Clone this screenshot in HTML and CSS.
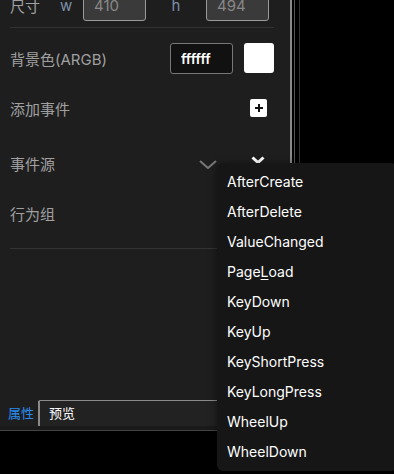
FILE: index.html
```html
<!DOCTYPE html>
<html lang="zh">
<head>
 <meta charset="UTF-8">
 <meta name="viewport" content="width=device-width, initial-scale=1.0">
 <title>属性</title>
 <link rel="stylesheet" href="styles.css">
</head>
<body>
<div class="app">
 <div class="main">
  <div class="panel">
   <div class="content">
    <div class="row size-row">
     <span class="label">尺寸</span>
     <span class="axis">w</span>
     <input class="num" value="410" disabled>
     <span class="axis axis-h">h</span>
     <input class="num" value="494" disabled>
    </div>
    <div class="sep"></div>
    <div class="row row-color">
     <span class="label">背景色(ARGB)</span>
     <input class="color-input" value="ffffff">
     <span class="swatch"></span>
    </div>
    <div class="row">
     <span class="label">添加事件</span>
     <button class="add-btn">
      <svg width="10" height="10" viewBox="0 0 10 10"><path d="M5 1v8M1 5h8" stroke="#111" stroke-width="2"/></svg>
     </button>
    </div>
    <div class="row row-tall">
     <span class="label">事件源</span>
     <svg class="chev-gray" width="18" height="9" viewBox="0 0 18 9"><path d="M1 1l8 7 8-7" fill="none" stroke="#777" stroke-width="2"/></svg>
     <svg class="chev-white" width="14" height="8" viewBox="0 0 14 8"><path d="M1.5 1.5l5.5 5 5.5-5" fill="none" stroke="#fff" stroke-width="3"/></svg>
    </div>
    <div class="row">
     <span class="label">行为组</span>
    </div>
    <div class="sep sep-bottom"></div>
   </div>
  </div>
  <div class="splitter"></div>
  <div class="view"></div>
 </div>
 <div class="tabs">
  <div class="tab active">属性</div>
  <div class="tab">预览</div>
 </div>
 <div class="status"></div>

 <ul class="menu">
  <li>AfterCreate</li>
  <li>AfterDelete</li>
  <li>ValueChanged</li>
  <li>Page<u>L</u>oad</li>
  <li>KeyDown</li>
  <li>KeyUp</li>
  <li>KeyShortPress</li>
  <li>KeyLongPress</li>
  <li>WheelUp</li>
  <li>WheelDown</li>
 </ul>
</div>
</body>
</html>
```

FILE: styles.css
```css
body{
 margin: 0;
 background: #000;
 font-family: Inter, "Noto Sans CJK SC", sans-serif;
 font-size: 14px;
 overflow: hidden;
}

.app{
 position: relative;
 width: 394px;
 height: 474px;
 display: flex;
 flex-direction: column;
}

.main{
 display: flex;
 height: 400px;
}

.panel{
 width: 290px;
 background: #1e1e1e;
 overflow: hidden;
}

/* panel is scrolled down a little, top row is half hidden */
.content{
 padding: 0 16px 0 10px;
 margin-top: -10px;
}

.row{
 display: flex;
 align-items: center;
 height: 50px;
}

.label{
 color: #a0a0a0;
 font-size: 15px;
 flex: 1;
}

.size-row{
 height: 31px;
}
.size-row .label{
 flex: 0 0 50px;
}

.axis{
 color: #7d8fa8;
 font-size: 15px;
 width: 23px;
}
.axis-h{
 width: 60px;
 text-align: center;
}

.num{
 width: 63px;
 height: 31px;
 box-sizing: border-box;
 background: #3a3a3a;
 border: 1px solid #9a9a9a;
 border-radius: 3px;
 color: #888;
 font: 15px Inter, sans-serif;
 padding: 0 10px;
}

.sep{
 height: 1px;
 background: #333;
 margin-top: 6px;
}

.row-color{
 margin-top: 5px;
}

.color-input{
 width: 63px;
 height: 31px;
 box-sizing: border-box;
 background: #111;
 border: 1px solid #777;
 border-radius: 3px;
 color: #fff;
 font: 600 14px Inter, sans-serif;
 padding: 0 10px;
 margin-right: 11px;
}

.swatch{
 width: 30px;
 height: 30px;
 background: #fff;
 border-radius: 3px;
}

.add-btn{
 width: 17px;
 height: 18px;
 padding: 0;
 border: none;
 border-radius: 2px;
 background: #fff;
 display: flex;
 align-items: center;
 justify-content: center;
 margin-right: 7px;
}

.row-tall{
 height: 55px;
 box-sizing: border-box;
 padding-top: 6px;
}

.chev-gray{
 margin-right: 34px;
 margin-top: 2px;
}
.chev-white{
 margin-right: 9px;
 margin-top: -8px;
}

.sep-bottom{
 margin-top: 10px;
}

.splitter{
 width: 10px;
 box-sizing: border-box;
 border-left: 2px solid #8a8a8a;
 position: relative;
 background: #000;
}
.splitter::before{
 content: "";
 position: absolute;
 left: 2px;
 top: 0;
 bottom: 0;
 width: 1px;
 background: #555;
}
.splitter::after{
 content: "";
 position: absolute;
 left: 7px;
 top: 0;
 bottom: 0;
 width: 1px;
 background: #333;
}

.view{
 flex: 1;
 background: #000;
}

.tabs{
 display: flex;
 height: 26px;
 background: #222;
 width: 300px;
}

.tab{
 color: #fff;
 padding: 0 10px 0 9px;
 line-height: 25px;
 border-top: 1px solid #8a8a8a;
 font-size: 13px;
 white-space: nowrap;
}
.tab.active{
 color: #2a8cf0;
 border-top-color: transparent;
 border-right: 2px solid #8a8a8a;
 background: #1e1e1e;
 width: 40px;
 box-sizing: border-box;
 padding: 0 0 0 8px;
}
.tab:last-child{
 flex: 1;
}

.status{
 height: 4px;
 background: #1a1a1a;
 border-bottom: 1px solid #444;
 width: 300px;
}

.menu{
 position: absolute;
 left: 217px;
 top: 163px;
 width: 180px;
 margin: 0;
 padding: 4px 0;
 list-style: none;
 background: #161616;
 border-radius: 6px;
 box-shadow: 0 2px 8px rgba(0,0,0,0.5);
}

.menu li{
 height: 30px;
 line-height: 30px;
 padding-left: 10px;
 color: #fff;
 font-size: 14px;
}

.menu u{
 text-decoration-thickness: 1px;
 text-underline-offset: 2px;
}
```
